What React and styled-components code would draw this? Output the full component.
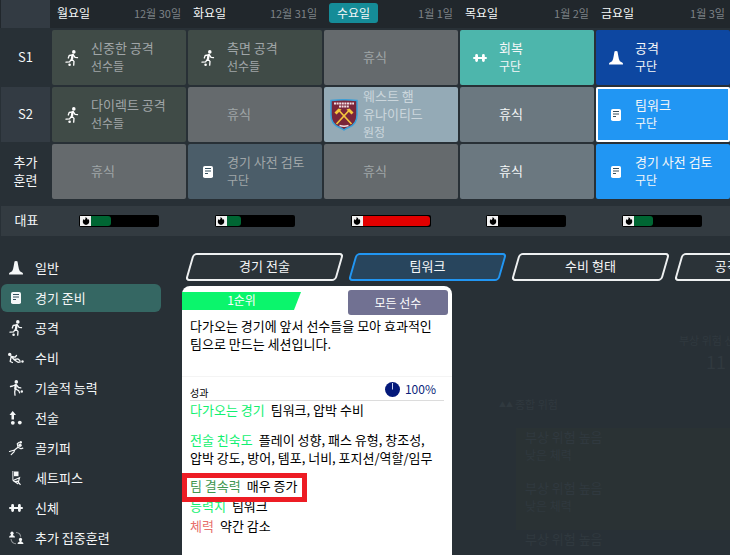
import styled, { createGlobalStyle } from "styled-components";

const GlobalStyle = createGlobalStyle`
  * {
    box-sizing: border-box;
  }
  body {
    margin: 0;
    background-color: #283036;
    color: #f5f7f8;
    font-family: "Noto Sans CJK KR", sans-serif;
    font-size: 13px;
    font-weight: 400;
    line-height: 18px;
    word-break: keep-all;
  }
  button {
    font: inherit;
    color: inherit;
    border: none;
    background: none;
    padding: 0;
    cursor: pointer;
  }
`;

const Page = styled.div`
  display: flex;
  flex-direction: column;
  min-height: 100vh;
  overflow: hidden;
`;

const Calendar = styled.table`
  display: block;
`;

const Section = styled.tbody`
  display: flex;
  flex-direction: column;
  gap: 2px;
`;

const Row = styled.tr`
  display: grid;
  grid-template-columns: 50px repeat(5, 1fr);
  gap: 2px;
`;

const HeadRow = styled(Row)`
  height: 28px;
  background-color: #21272c;
`;

const LoadRow = styled(Row)`
  height: 30px;
  margin-top: 5px;
  margin-left: 1px;
  background-color: #333b41;
`;

const RowLabel = styled.th`
  display: flex;
  align-items: center;
  justify-content: center;
  margin-left: 1px;
  padding: 0 10px 2px;
  font-weight: 400;
  background-color: ${(props) => (props.$light ? "#333b43" : "transparent")};
`;

const Day = styled.th`
  display: flex;
  align-items: center;
  justify-content: space-between;
  padding: 0 5px 2px;
  font-size: 12px;
  font-weight: 400;
`;

const DayName = styled.span`
  line-height: 20px;
  padding: ${(props) => (props.$today ? "0 8px" : "0")};
  border-radius: 3px;
  background-color: ${(props) => (props.$today ? "#158c98" : "transparent")};
`;

const DayDate = styled.span`
  color: #7d8286;
  font-size: 11px;
`;

const Slot = styled.td`
  display: flex;
  padding: 0;
`;

const tones = {
  players: "#404b47",
  rest: "#656a6d",
  restOpen: "#6b7880",
  review: "#4b5d69",
  match: "#94aab6",
  recovery: "#4db6ac",
  general: "#0d47a1",
  team: "#2196f3",
};

const Session = styled.button`
  flex: 1;
  display: flex;
  align-items: center;
  height: 55px;
  padding: 0 4px 0 1px;
  border-radius: 2px;
  text-align: left;
  background-color: ${(props) => tones[props.$tone]};
  color: ${(props) => (props.$past ? "#a0a6a8" : "#f5f7f8")};
  box-shadow: ${(props) => (props.$selected ? "inset 0 0 0 2px #fff" : "none")};
`;

const MatchSession = styled(Session)`
  color: #cbd6dc;
`;

const SessionIcon = styled.span`
  display: flex;
  flex: none;
  justify-content: center;
  width: 38px;
  color: #fff;
`;

const SessionText = styled.span`
  display: flex;
  flex-direction: column;
  padding-bottom: 2px;
`;

const Squad = styled.span`
  font-size: 12px;
`;

const LoadCell = styled.td`
  display: flex;
  align-items: center;
  padding: 0 26px;
`;

const Load = styled.div`
  display: flex;
  width: 80px;
  height: 12px;
  padding: 1px;
  border-radius: 2px;
  background-color: #000;
`;

const Flame = styled.span`
  display: flex;
  align-items: center;
  justify-content: center;
  width: 11px;
  background-color: #f1f1f1;
  color: #000;
`;

const Track = styled.span`
  flex: 1;
  display: flex;
`;

const Fill = styled.span`
  border-radius: 0 3px 3px 0;
  background-color: ${(props) => (props.$heavy ? "#e30000" : "#006633")};
`;

const Planner = styled.div`
  flex: 1;
  display: flex;
  gap: 20px;
  margin-top: 17px;
`;

const Sidebar = styled.nav`
  display: flex;
  flex-direction: column;
  flex: none;
  gap: 2px;
  width: 162px;
  padding: 1px 1px 0;
`;

const Category = styled.button`
  display: flex;
  align-items: center;
  height: 28px;
  border-radius: 6px;
  background-color: ${(props) => (props.$active ? "#356763" : "transparent")};
`;

const CategoryIcon = styled.span`
  display: flex;
  justify-content: center;
  width: 30px;
  margin-right: 4px;
`;

const Main = styled.main`
  flex: 1;
  display: flex;
  flex-direction: column;
  gap: 5px;
  min-width: 0;
`;

const Tabs = styled.div`
  display: flex;
  gap: 6px;
  padding-left: 4px;
`;

const Tab = styled.button`
  position: relative;
  flex: none;
  width: 157px;
  height: 28px;
  padding-bottom: 2px;
  z-index: 0;
  &::before {
    content: "";
    position: absolute;
    z-index: -1;
    inset: 0 3px;
    border: 2px solid ${(props) => (props.$active ? "#2196f3" : "#eef0f1")};
    border-radius: 4px;
    background-color: ${(props) => (props.$active ? "#28455d" : "#2b3338")};
    transform: skewX(-16deg);
  }
`;

const Content = styled.div`
  flex: 1;
  display: flex;
`;

const Card = styled.article`
  width: 270px;
  flex: none;
  border-radius: 8px 8px 0 0;
  background-color: #fff;
  color: #000;
`;

const CardTop = styled.header`
  display: flex;
  justify-content: space-between;
  padding: 4px 4px 0 0;
`;

const Priority = styled.span`
  width: 119px;
  height: 18px;
  margin-top: 2px;
  text-align: center;
  font-size: 12px;
  line-height: 16px;
  color: #fff;
  background-color: #0bf56c;
  clip-path: polygon(0 0, 100% 0, 112px 100%, 0 100%);
`;

const SquadButton = styled.button`
  width: 100px;
  height: 25px;
  border-radius: 3px;
  background-color: #717192;
  color: #fff;
  font-size: 12px;
`;

const Summary = styled.p`
  height: 60px;
  margin: 2px 0 0;
  padding: 0 8px;
  border-bottom: 1px solid #f4f4f4;
`;

const Outcome = styled.div`
  display: flex;
  align-items: flex-end;
  justify-content: space-between;
  height: 24px;
  margin: 0 8px;
  padding-right: 8px;
  border-bottom: 1px solid #dcdcdc;
`;

const OutcomeTitle = styled.h2`
  margin: 0;
  font-size: 10px;
  font-weight: 400;
  line-height: 14px;
`;

const Share = styled.span`
  display: flex;
  align-items: center;
  gap: 5px;
  padding-bottom: 2px;
  color: #0a1f7a;
  font-size: 12px;
`;

const Effects = styled.dl`
  margin: 0;
  padding: 0 8px;
`;

const Effect = styled.div`
  position: relative;
  margin-bottom: ${(props) => props.$after || 2}px;
  dt,
  dd {
    display: inline;
    margin: 0;
  }
  dt {
    margin-right: 6px;
    color: ${(props) => props.$color || "#12f070"};
  }
`;

const Marker = styled.span`
  position: absolute;
  top: -4px;
  left: -8px;
  width: 125px;
  height: 29px;
  border: 5px solid #ed1c24;
  z-index: 1;
`;

const RiskPanel = styled.aside`
  flex: 1;
  display: flex;
  flex-direction: column;
  min-width: 0;
  padding-top: 45px;
  color: #30393f;
  overflow: hidden;
`;

const RiskHead = styled.div`
  align-self: flex-end;
  width: 51px;
  font-size: 11px;
  white-space: nowrap;
`;

const RiskCount = styled.div`
  padding-left: 27px;
  font-size: 18px;
  line-height: 24px;
`;

const RiskTitle = styled.div`
  display: flex;
  gap: 2px;
  margin: 22px 0 15px 47px;
  font-size: 11px;
`;

const RiskArrows = styled.span`
  font-size: 7px;
`;

const RiskItem = styled.div`
  display: flex;
  flex-direction: column;
  margin-left: 64px;
  padding: 0 9px ${(props) => (props.$last ? 0 : 15)}px;
  background-color: ${(props) => (props.$last ? "transparent" : "#2a3234")};
`;

const icons = {
  cone: (
    <path
      fill="currentColor"
      d="M6.5 1.6Q6.7.9 8 .9t1.5.7L10.3 6q.5 3.6 1.6 5.2l2.6 1.5q.5.4.5 1.7H1q0-1.3.5-1.7l2.6-1.5Q5.2 9.6 5.7 6Z"
    />
  ),
  note: (
    <>
      <rect x="3" y="2" width="10" height="12" rx="1.8" fill="currentColor" />
      <path d="M5 4.5h6M5 7h6M5 9.500h3" stroke="#35505f" strokeWidth="1" />
    </>
  ),
  run: (
    <>
      <circle cx="9.8" cy="1.9" r="1.8" fill="currentColor" />
      <circle cx="5.6" cy="14.8" r="1.3" fill="currentColor" />
      <path
        d="M8.8 4.5 7.6 9.2M8.6 4.8 5.2 5.500 4.3 8M9.400 5l1.700 2.400 2.400.3M7.600 9l2.400 2.400-.3 3.800M7.500 9.200 5.600 11.900 2 12.200"
        fill="none"
        stroke="currentColor"
        strokeWidth="1.3"
        strokeLinejoin="round"
        strokeLinecap="round"
      />
      <path d="M7.6 4.2h2.200l-.7 5H6.800Z" fill="currentColor" />
    </>
  ),
  tackle: (
    <>
      <circle cx="1.700" cy="4.400" r="1.700" fill="currentColor" />
      <circle cx="14.500" cy="11.500" r="1.200" fill="currentColor" />
      <path
        d="m2.800 6 3.700 4 3.500 2.300 2.300-.5M3.500 6.500 7 7.200l1.500-1.700M6 9.500l4-.6 1.800 1.600M3 7.500l-.8 4 2.200 1"
        fill="none"
        stroke="currentColor"
        strokeWidth="1.300"
        strokeLinejoin="round"
        strokeLinecap="round"
      />
    </>
  ),
  dribble: (
    <>
      <circle cx="8.300" cy="1.900" r="1.800" fill="currentColor" />
      <circle cx="13.800" cy="11.500" r="1.200" fill="currentColor" />
      <path
        d="M7.700 4.500 7.200 9M7.500 4.800 4.700 6 2.500 6.500M8.500 5l2 2.500 2.300.3M7.300 9 6.700 12l.3 3.200M7.600 9l3 1.600 1 2.200"
        fill="none"
        stroke="currentColor"
        strokeWidth="1.300"
        strokeLinejoin="round"
        strokeLinecap="round"
      />
      <path d="M6.700 4.200h2.200l-.4 5H6.200Z" fill="currentColor" />
    </>
  ),
  tactics: (
    <>
      <path d="M4.700 1 8 5H6v4.500H3.500V5h-2Z" fill="currentColor" />
      <circle cx="4.800" cy="12.800" r="1.900" fill="currentColor" />
      <circle cx="11.800" cy="12.600" r="1.900" fill="currentColor" />
    </>
  ),
  keeper: (
    <>
      <circle cx="12.800" cy="2.200" r="1.200" fill="currentColor" />
      <circle cx="12" cy="5.200" r="1.700" fill="currentColor" />
      <path
        d="M10.300 7 6.500 10 1.500 11.500M6.800 9.800l-.8 2-2.800 2.800M10 7 9.300 3.800l2-1.500M10.300 7.500l2.700 1.300 1.800-.7"
        fill="none"
        stroke="currentColor"
        strokeWidth="1.200"
        strokeLinejoin="round"
        strokeLinecap="round"
      />
    </>
  ),
  flag: (
    <>
      <path d="M4.800 1v9.500" stroke="currentColor" strokeOpacity=".6" strokeWidth="1.600" />
      <path d="M6 1.500h4.500v4.700H6Z" fill="currentColor" />
      <path
        d="m5 10.500 6.500-2.700-1.200 4.200 2.200 2.800M5 10.500l5.300 3.500M7 11.500l3-.3"
        fill="none"
        stroke="currentColor"
        strokeWidth="1.200"
      />
    </>
  ),
  dumbbell: (
    <>
      <path d="M2 8h12" stroke="currentColor" strokeWidth="2" strokeLinecap="round" />
      <path
        d="M4.600 5.500v5M11.400 5.500v5"
        stroke="currentColor"
        strokeWidth="2.800"
        strokeLinecap="round"
      />
    </>
  ),
  swap: (
    <>
      <circle cx="4" cy="3.200" r="1.600" fill="currentColor" />
      <path d="M1 7.500q0-2 2-2.200V4h2v1.300q2 .2 2 2.200Z" fill="currentColor" />
      <circle cx="12.500" cy="9.400" r="1.600" fill="currentColor" />
      <path d="M9.500 14q0-2 2-2.200v-1.500h2v1.500q2 .2 2 2.200Z" fill="currentColor" />
      <path
        d="M8 2.500q4.300.3 4.700 4.300M3 9q.5 4.300 5 4.800"
        fill="none"
        stroke="currentColor"
        strokeOpacity=".5"
        strokeWidth="1.100"
      />
    </>
  ),
};

const Icon = ({ name }) => (
  <svg width="16" height="16" viewBox="0 0 16 16" overflow="visible" aria-hidden="true">
    {icons[name]}
  </svg>
);

const Crest = () => (
  <svg width="28" height="32" viewBox="0 0 28 32" aria-hidden="true">
    <path
      d="M1 1.500Q14 0 27 1.500V16q0 9-8 12.300-3 1.200-5 2.700-2-1.500-5-2.700Q1 25 1 16Z"
      fill="#7a263a"
      stroke="#3aa0d8"
      strokeWidth="1.500"
    />
    <path d="M4 4.500h20M9 7.500h10" stroke="#f3dfe4" strokeWidth="2" strokeDasharray="2 .6" />
    <path d="m6.500 25 13-14M21.500 25l-13-14" stroke="#f4c63d" strokeWidth="1.700" />
    <path d="m4.500 13.500 4-4 3 1-5 5ZM23.500 13.500l-4-4-3 1 5 5Z" fill="#f4c63d" />
    <path d="M9.500 26.500q4.500 1.500 9 0" fill="none" stroke="#f3dfe4" strokeWidth="1.500" />
  </svg>
);

const FlameIcon = () => (
  <svg width="8" height="8" viewBox="0 0 8 8" aria-hidden="true">
    <path
      fill="currentColor"
      d="M3.600 0q2 1.200 1.900 2.800l.8-.8q1.300 1.500.9 3.200Q6.500 8 4 8T.8 5.200Q.5 3.400 1.800 2l.8 1.200Q3.900 2 3.600 0Z"
    />
  </svg>
);

const Dial = () => (
  <svg width="15" height="15" viewBox="0 0 15 15" aria-hidden="true">
    <circle cx="7.500" cy="7.500" r="7.500" fill="#04197a" />
    <path d="M7.500 1v6.500" stroke="#c9d0ee" strokeWidth="1" />
  </svg>
);

const days = [
  { name: "월요일", date: "12월 30일", load: 30 },
  { name: "화요일", date: "12월 31일", load: 21 },
  { name: "수요일", date: "1월 1일", load: 100, today: true },
  { name: "목요일", date: "1월 2일", load: 0 },
  { name: "금요일", date: "1월 3일", load: 28 },
];

const pastRest = { title: "휴식", tone: "rest", past: true };
const openRest = { title: "휴식", tone: "restOpen" };

const schedule = [
  {
    label: "S1",
    slots: [
      { title: "신중한 공격", squad: "선수들", icon: "run", tone: "players", past: true },
      { title: "측면 공격", squad: "선수들", icon: "run", tone: "players", past: true },
      pastRest,
      { title: "회복", squad: "구단", icon: "dumbbell", tone: "recovery" },
      { title: "공격", squad: "구단", icon: "cone", tone: "general" },
    ],
  },
  {
    label: "S2",
    light: true,
    slots: [
      { title: "다이렉트 공격", squad: "선수들", icon: "run", tone: "players", past: true },
      pastRest,
      { title: "웨스트 햄 유나이티드", squad: "원정", tone: "match", match: true },
      openRest,
      { title: "팀워크", squad: "구단", icon: "note", tone: "team", selected: true },
    ],
  },
  {
    label: "추가 훈련",
    slots: [
      pastRest,
      { title: "경기 사전 검토", squad: "구단", icon: "note", tone: "review", past: true },
      pastRest,
      openRest,
      { title: "경기 사전 검토", squad: "구단", icon: "note", tone: "team" },
    ],
  },
];

const categories = [
  ["cone", "일반"],
  ["note", "경기 준비"],
  ["run", "공격"],
  ["tackle", "수비"],
  ["dribble", "기술적 능력"],
  ["tactics", "전술"],
  ["keeper", "골키퍼"],
  ["flag", "세트피스"],
  ["dumbbell", "신체"],
  ["swap", "추가 집중훈련"],
];

const tabs = ["경기 전술", "팀워크", "수비 형태", "공격 위치 선정"];

const SessionCell = ({ slot }) => {
  const Box = slot.match ? MatchSession : Session;
  return (
    <Slot>
      <Box $tone={slot.tone} $past={slot.past} $selected={slot.selected}>
        <SessionIcon>
          {slot.match && <Crest />}
          {slot.icon && <Icon name={slot.icon} />}
        </SessionIcon>
        <SessionText>
          <span>{slot.title}</span>
          {slot.squad && <Squad>{slot.squad}</Squad>}
        </SessionText>
      </Box>
    </Slot>
  );
};

const Schedule = () => (
  <Calendar>
    <Section>
      <HeadRow>
        <RowLabel as="td" $light />
        {days.map((day) => (
          <Day key={day.name} scope="col">
            <DayName $today={day.today}>{day.name}</DayName>
            <DayDate>{day.date}</DayDate>
          </Day>
        ))}
      </HeadRow>
      {schedule.map((row) => (
        <Row key={row.label}>
          <RowLabel scope="row" $light={row.light}>
            {row.label}
          </RowLabel>
          {row.slots.map((slot, i) => (
            <SessionCell key={i} slot={slot} />
          ))}
        </Row>
      ))}
      <LoadRow>
        <RowLabel scope="row">대표</RowLabel>
        {days.map((day) => (
          <LoadCell key={day.name}>
            <Load>
              <Flame>
                <FlameIcon />
              </Flame>
              <Track>
                <Fill $heavy={day.load > 90} style={{ width: `${day.load}%` }} />
              </Track>
            </Load>
          </LoadCell>
        ))}
      </LoadRow>
    </Section>
  </Calendar>
);

const SessionCard = () => (
  <Card>
    <CardTop>
      <Priority>1순위</Priority>
      <SquadButton>모든 선수</SquadButton>
    </CardTop>
    <Summary>다가오는 경기에 앞서 선수들을 모아 효과적인 팀으로 만드는 세션입니다.</Summary>
    <Outcome>
      <OutcomeTitle>성과</OutcomeTitle>
      <Share>
        <Dial />
        100%
      </Share>
    </Outcome>
    <Effects>
      <Effect $after={12}>
        <dt>다가오는 경기</dt>
        <dd>팀워크, 압박 수비</dd>
      </Effect>
      <Effect $after={10}>
        <dt>전술 친숙도</dt>
        <dd>플레이 성향, 패스 유형, 창조성, 압박 강도, 방어, 템포, 너비, 포지션/역할/임무</dd>
      </Effect>
      <Effect $color="#3f9650">
        <dt>팀 결속력</dt>
        <dd>매우 증가</dd>
        <Marker />
      </Effect>
      <Effect>
        <dt>능력치</dt>
        <dd>팀워크</dd>
      </Effect>
      <Effect $color="#e8706e">
        <dt>체력</dt>
        <dd>약간 감소</dd>
      </Effect>
    </Effects>
  </Card>
);

const Risks = () => (
  <RiskPanel>
    <RiskHead>
      부상 위험 선수
      <RiskCount>11</RiskCount>
    </RiskHead>
    <RiskTitle>
      <RiskArrows>▲▲</RiskArrows>
      종합 위험
    </RiskTitle>
    <RiskItem>
      <span>부상 위험 높음</span>
      <Squad>낮은 체력</Squad>
    </RiskItem>
    <RiskItem>
      <span>부상 위험 높음</span>
      <Squad>낮은 체력</Squad>
    </RiskItem>
    <RiskItem $last>부상 위험 높음</RiskItem>
  </RiskPanel>
);

const App = () => {
  return (
    <Page>
      <GlobalStyle />
      <Schedule />
      <Planner>
        <Sidebar>
          {categories.map(([icon, label]) => (
            <Category key={label} $active={label === "경기 준비"}>
              <CategoryIcon>
                <Icon name={icon} />
              </CategoryIcon>
              {label}
            </Category>
          ))}
        </Sidebar>
        <Main>
          <Tabs>
            {tabs.map((tab) => (
              <Tab key={tab} $active={tab === "팀워크"}>
                {tab}
              </Tab>
            ))}
          </Tabs>
          <Content>
            <SessionCard />
            <Risks />
          </Content>
        </Main>
      </Planner>
    </Page>
  );
};

export default App;
